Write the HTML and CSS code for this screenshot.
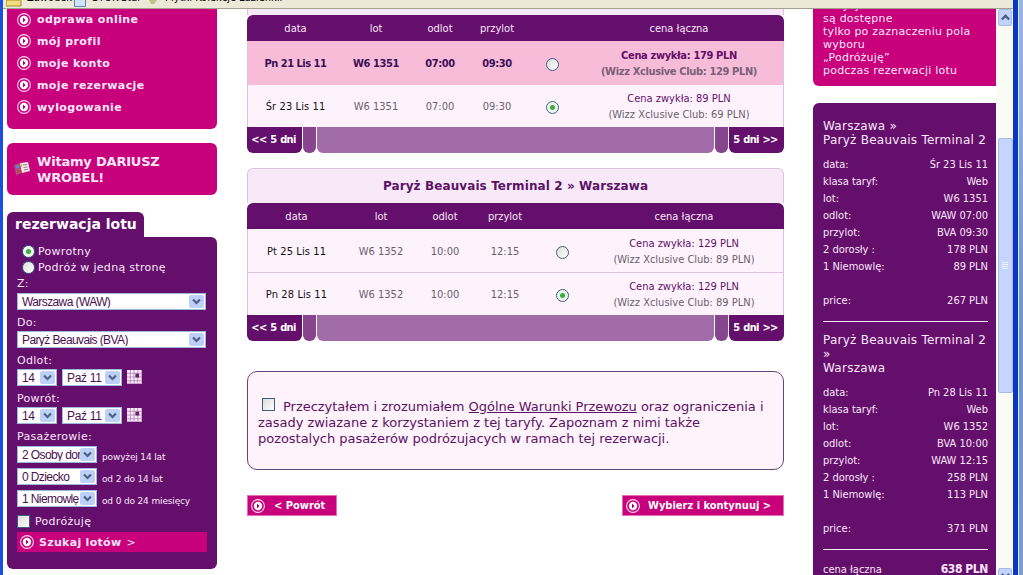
FILE: index.html
```html
<!DOCTYPE html>
<html lang="pl">
<head>
  <meta charset="UTF-8" />
  <title>Wizz Air - wybór lotu</title>
  <link rel="stylesheet" href="styles.css">
</head>
<body>
  <!-- shared icons -->
  <svg class="defs" width="0" height="0">
    <symbol id="bullet" viewBox="0 0 14 14">
      <circle cx="7" cy="7" r="6.4" fill="none" stroke="#fbd5ee" stroke-width="1.1"/>
      <circle cx="7" cy="7" r="4.2" fill="#fff"/>
      <path d="M6 4.6 L8.6 7 L6 9.4 Z" fill="#a0006e"/>
    </symbol>
    <symbol id="calendar" viewBox="0 0 16 15">
      <rect width="16" height="15" fill="#fbeefb"/>
      <path d="M0 3.5H16M0 7.5H16M0 11.5H16M3.5 0V15M7.5 0V15M11.5 0V15" stroke="#b98abd" stroke-width="1"/>
      <rect x="9" y="4" width="4" height="4" fill="#5a2a5e"/>
      <path d="M0 14.5H15.5V0" fill="none" stroke="#c79ac9"/>
    </symbol>
    <symbol id="arrow" viewBox="0 0 15 13">
      <path d="M4 4.5 L7.5 8 L11 4.5" fill="none" stroke="#4d6185" stroke-width="2.2"/>
    </symbol>
  </svg>

  <div class="window">
    <div class="toolbar">
      <svg class="folder" width="16" height="8" viewBox="0 0 16 8"><path d="M0 0H15V6H0Z" fill="#f3dc7c" stroke="#a58a35"/></svg>
      <span class="mark1">Zawodek</span>
      <svg width="12" height="8" viewBox="0 0 12 8"><path d="M.5 0V6.5H11.5V0" fill="#cfe3fb" stroke="#5d84c4"/></svg>
      <span class="mark2">STOK-Star</span>
      <svg width="10" height="8" viewBox="0 0 10 8"><path d="M1 0H9L6 4H3Z" fill="#b9c487"/></svg>
      <span class="mark3">Płytki Kolekcje Łazienkii</span>
    </div>

    <div class="viewport">
      <div class="page">
        <div class="left">
          <div class="menu">
            <a><svg><use href="#bullet"/></svg><span>odprawa online</span></a>
            <a><svg><use href="#bullet"/></svg><span>mój profil</span></a>
            <a><svg><use href="#bullet"/></svg><span>moje konto</span></a>
            <a><svg><use href="#bullet"/></svg><span>moje rezerwacje</span></a>
            <a><svg><use href="#bullet"/></svg><span>wylogowanie</span></a>
          </div>

          <div class="welcome">
            <svg width="16" height="15" viewBox="0 0 16 15">
              <path d="M0 4L6 2L8 12L2 14Z" fill="#a9508f"/>
              <path d="M6 2L14 1L16 10L8 12Z" fill="#f6eadc"/>
              <path d="M9 4L13 3.5M9.5 6.5L13.5 6M10 9L14 8.3" stroke="#8a79b8"/>
              <path d="M2 4H5V7H2Z" fill="#6f7bd0"/>
              <path d="M3 11L6 7L8 12Z" fill="#c8452e"/>
              <path d="M6 3L8 2.5L8.5 6L7 6Z" fill="#e8c33f"/>
            </svg>
            <p>Witamy DARIUSZ<br>WROBEL!</p>
          </div>

          <h2 class="tab">rezerwacja lotu</h2>
          <div class="booking">
            <div class="choice"><i class="radio on"></i><span>Powrotny</span></div>
            <div class="choice"><i class="radio"></i><span>Podróż w jedną stronę</span></div>
            <label>Z:</label>
            <div class="row"><div class="select wide"><span>Warszawa (WAW)</span><svg><use href="#arrow"/></svg></div></div>
            <label>Do:</label>
            <div class="row"><div class="select wide"><span>Paryż Beauvais (BVA)</span><svg><use href="#arrow"/></svg></div></div>
            <label>Odlot:</label>
            <div class="row">
              <div class="select day"><span>14</span><svg><use href="#arrow"/></svg></div>
              <div class="select month"><span>Paź 11</span><svg><use href="#arrow"/></svg></div>
              <svg class="cal"><use href="#calendar"/></svg>
            </div>
            <label>Powrót:</label>
            <div class="row">
              <div class="select day"><span>14</span><svg><use href="#arrow"/></svg></div>
              <div class="select month"><span>Paź 11</span><svg><use href="#arrow"/></svg></div>
              <svg class="cal"><use href="#calendar"/></svg>
            </div>
            <label>Pasażerowie:</label>
            <div class="passengers">
              <div class="row pax"><div class="select num"><span>2 Osoby dorosłe</span><svg><use href="#arrow"/></svg></div><small>powyżej 14 lat</small></div>
              <div class="row pax"><div class="select num"><span>0 Dziecko</span><svg><use href="#arrow"/></svg></div><small>od 2 do 14 lat</small></div>
              <div class="row pax"><div class="select num"><span>1 Niemowlę</span><svg><use href="#arrow"/></svg></div><small>od 0 do 24 miesięcy</small></div>
            </div>
            <div class="travel"><i class="check"></i><span>Podróżuję</span></div>
            <div class="search"><svg><use href="#bullet"/></svg><b>Szukaj lotów</b><span>&gt;</span></div>
          </div>
        </div>

        <div class="main">
          <div class="flights first">
            <div class="title"></div>
            <div class="line head"><span>data</span><span>lot</span><span>odlot</span><span>przylot</span><span></span><span>cena łączna</span></div>
            <div class="line picked">
              <span class="date">Pn 21 Lis 11</span><span>W6 1351</span><span>07:00</span><span>09:30</span><span><i class="radio"></i></span>
              <span class="price"><em>Cena zwykła: 179 PLN</em><br>(Wizz Xclusive Club: 129 PLN)</span>
            </div>
            <div class="line">
              <span class="date">Śr 23 Lis 11</span><span>W6 1351</span><span>07:00</span><span>09:30</span><span><i class="radio on"></i></span>
              <span class="price"><em>Cena zwykła: 89 PLN</em><br>(Wizz Xclusive Club: 69 PLN)</span>
            </div>
            <div class="pager"><b>&lt;&lt; 5 dni</b><i></i><i class="mid"></i><i></i><b>5 dni &gt;&gt;</b></div>
          </div>

          <div class="flights second">
            <div class="title"><h3>Paryż Beauvais Terminal 2 » Warszawa</h3></div>
            <div class="line head"><span>data</span><span>lot</span><span>odlot</span><span>przylot</span><span></span><span>cena łączna</span></div>
            <div class="line split">
              <span class="date">Pt 25 Lis 11</span><span>W6 1352</span><span>10:00</span><span>12:15</span><span><i class="radio"></i></span>
              <span class="price"><em>Cena zwykła: 129 PLN</em><br>(Wizz Xclusive Club: 89 PLN)</span>
            </div>
            <div class="line">
              <span class="date">Pn 28 Lis 11</span><span>W6 1352</span><span>10:00</span><span>12:15</span><span><i class="radio on"></i></span>
              <span class="price"><em>Cena zwykła: 129 PLN</em><br>(Wizz Xclusive Club: 89 PLN)</span>
            </div>
            <div class="pager"><b>&lt;&lt; 5 dni</b><i></i><i class="mid"></i><i></i><b>5 dni &gt;&gt;</b></div>
          </div>

          <div class="terms">
            <i class="check"></i>Przeczytałem i zrozumiałem <u>Ogólne Warunki Przewozu</u> oraz ograniczenia i<br>
            zasady zwiazane z korzystaniem z tej taryfy. Zapoznam z nimi także<br>
            pozostalych pasażerów podrózujacych w ramach tej rezerwacji.
          </div>

          <div class="buttons">
            <div class="btn back"><svg><use href="#bullet"/></svg><b>&lt; Powrót</b></div>
            <div class="btn next"><svg><use href="#bullet"/></svg><b>Wybierz i kontynuuj &gt;</b></div>
          </div>
        </div>

        <div class="right">
          <div class="info"><p>Pozycje<br>są dostępne<br>tylko po zaznaczeniu pola<br>wyboru<br>„Podróżuję”<br>podczas rezerwacji lotu</p></div>
          <div class="summary">
            <h4>Warszawa »<br>Paryż Beauvais Terminal 2</h4>
            <dl>
              <dt>data:</dt><dd>Śr 23 Lis 11</dd>
              <dt>klasa taryf:</dt><dd>Web</dd>
              <dt>lot:</dt><dd>W6 1351</dd>
              <dt>odlot:</dt><dd>WAW 07:00</dd>
              <dt>przylot:</dt><dd>BVA 09:30</dd>
              <dt>2 dorosły :</dt><dd>178 PLN</dd>
              <dt>1 Niemowlę:</dt><dd>89 PLN</dd>
              <dt class="sum">price:</dt><dd class="sum">267 PLN</dd>
            </dl>
            <h4>Paryż Beauvais Terminal 2<br>»<br>Warszawa</h4>
            <dl>
              <dt>data:</dt><dd>Pn 28 Lis 11</dd>
              <dt>klasa taryf:</dt><dd>Web</dd>
              <dt>lot:</dt><dd>W6 1352</dd>
              <dt>odlot:</dt><dd>BVA 10:00</dd>
              <dt>przylot:</dt><dd>WAW 12:15</dd>
              <dt>2 dorosły :</dt><dd>258 PLN</dd>
              <dt>1 Niemowlę:</dt><dd>113 PLN</dd>
              <dt class="sum">price:</dt><dd class="sum">371 PLN</dd>
            </dl>
            <div class="total"><span>cena łączna</span><b>638 PLN</b></div>
          </div>
        </div>
      </div>

      <div class="scrollbar">
        <div class="sb-btn"><svg width="13" height="15" viewBox="0 0 13 15"><path d="M2.8 9.5L6.5 5.8L10.2 9.5" fill="none" stroke="#4d6185" stroke-width="2.4"/></svg></div>
        <div class="thumb"><i></i><i></i><i></i><i></i></div>
        <div class="sb-btn"><svg width="13" height="15" viewBox="0 0 13 15"><path d="M2.8 5L6.5 8.7L10.2 5" fill="none" stroke="#4d6185" stroke-width="2.4"/></svg></div>
      </div>
    </div>
  </div>
  <div class="desktop"></div>
</body>
</html>
```

FILE: styles.css
```css
* {
  box-sizing: border-box;
}

body {
  margin: 0;
  width: 1023px;
  height: 575px;
  display: flex;
  overflow: hidden;
  background: #fff;
  font-family: "DejaVu Sans", sans-serif;
  font-size: 11px;
}

h2, h3, h4, p, dl, dd {
  margin: 0;
}

.defs {
  display: none;
}

/* WINDOW */
.window {
  width: 1018px;
  height: 575px;
  display: flex;
  flex-direction: column;
  border-left: 3px solid #1a4fe0;
  border-right: 5px solid #0a36c4;
  overflow: hidden;
}

.desktop {
  flex: 1;
  border-left: 1px solid #dbe8fb;
  background: linear-gradient(#9ab4e4, #6f93cc 60%, #7e9dcc);
}

.toolbar {
  flex: none;
  height: 9px;
  display: flex;
  padding-left: 3px;
  background: #ece9d8;
  border-bottom: 1px solid #a3a18f;
  overflow: hidden;
  font: 11px/13px "DejaVu Sans Condensed", "DejaVu Sans", sans-serif;
  white-space: nowrap;
}

.toolbar span {
  margin-top: -9px;
}

.mark1 { width: 43px; margin-left: 5px; margin-right: 4px; }
.mark2 { width: 53px; margin-left: 6px; margin-right: 3px; }
.mark3 { margin-left: 7px; }

.viewport {
  flex: 1;
  display: flex;
  min-height: 0;
  overflow: hidden;
}

.page {
  width: 994px;
  display: flex;
  overflow: hidden;
}

/* LEFT */
.left {
  flex: none;
  width: 214px;
  padding-left: 4px;
  color: #fbe6fa;
}

.menu {
  height: 120px;
  padding-left: 10px;
  background: #c8007b;
  border-radius: 0 0 6px 6px;
}

.menu a {
  display: flex;
  align-items: center;
  gap: 6px;
  height: 22px;
  font-weight: bold;
  letter-spacing: 0.4px;
}

.menu a:first-child {
  height: 21px;
}

.menu svg, .search svg, .btn svg {
  width: 14px;
  height: 14px;
}

.welcome {
  display: flex;
  gap: 7px;
  height: 52px;
  margin-top: 14px;
  padding: 11px 0 0 7px;
  background: #c8007b;
  border-radius: 6px;
  font-weight: bold;
  font-size: 13px;
  line-height: 16px;
  letter-spacing: -0.2px;
}

.welcome svg {
  margin-top: 7px;
}

.tab {
  width: 137px;
  height: 26px;
  margin-top: 17px;
  padding-left: 8px;
  background: #640f6b;
  border-radius: 6px 6px 0 0;
  font-size: 14px;
  line-height: 24px;
  color: #fff;
  white-space: nowrap;
}

.booking {
  height: 332px;
  margin-top: -1px;
  padding: 6px 10px 0;
  background: #640f6b;
  border-radius: 0 6px 6px 6px;
}

.choice {
  display: flex;
  align-items: center;
  gap: 3px;
  height: 16px;
  padding-left: 5px;
  letter-spacing: 0.3px;
}

.radio {
  flex: none;
  display: inline-block;
  width: 13px;
  height: 13px;
  border: 1px solid #3a5f86;
  border-radius: 50%;
  background: linear-gradient(135deg, #dcdcd8, #fff);
}

.radio.on {
  background: radial-gradient(circle, #3fae3a 0 2px, #e9f3e6 3px, #fff);
}

.booking label {
  display: block;
  height: 16px;
  margin-top: 4px;
  line-height: 17px;
  letter-spacing: 0.3px;
}

.choice + label {
  margin-top: 0;
  height: 17px;
  line-height: 18px;
}

.row {
  display: flex;
  gap: 6px;
  height: 18px;
  align-items: center;
}

.select {
  display: flex;
  height: 17px;
  padding: 1px 1px 1px 4px;
  border: 1px solid #9bb8da;
  background: #fff;
  color: #4a1050;
  font: 12px/14px "Liberation Sans", Arial, sans-serif;
}

.select span {
  flex: 1;
  overflow: hidden;
  white-space: nowrap;
  letter-spacing: -0.6px;
}

.select svg {
  flex: none;
  width: 15px;
  height: 13px;
  background: #bdd0f8;
  border-radius: 2px;
}

.wide { width: 189px; }
.day { width: 40px; }
.month { width: 60px; margin-left: -1px; }
.num { width: 80px; }

.day span, .month span {
  letter-spacing: -0.3px;
}

.cal {
  width: 15px;
  height: 14px;
  margin-left: -1px;
}

.passengers {
  height: 67px;
  margin-top: -1px;
}

.pax {
  height: 22px;
  gap: 5px;
}

.pax small {
  padding-top: 6px;
  font-size: 9px;
  letter-spacing: -0.15px;
  white-space: nowrap;
}

.travel {
  display: flex;
  align-items: center;
  gap: 5px;
  height: 22px;
  letter-spacing: 0.3px;
}

.check {
  display: inline-block;
  width: 13px;
  height: 13px;
  border: 1px solid #3a5f86;
  background: linear-gradient(135deg, #dcdcd8, #fff);
}

.search {
  display: flex;
  align-items: center;
  gap: 5px;
  height: 20px;
  padding-left: 3px;
  background: #c8007b;
  letter-spacing: 0.3px;
}

/* MAIN */
.main {
  flex: none;
  width: 537px;
  margin-left: 30px;
}

.flights {
  font-family: "DejaVu Sans Condensed", "DejaVu Sans", sans-serif;
}

.title {
  height: 35px;
  border: 1px solid #dcc3dd;
  border-bottom: 0;
  border-radius: 6px 6px 0 0;
  background: #f7e9f8;
  text-align: center;
}

.title h3 {
  font: bold 12px/35px "DejaVu Sans", sans-serif;
  letter-spacing: 0.1px;
  color: #5c1266;
}

.first .title {
  height: 6px;
  border-top: 0;
  border-radius: 0;
}

.second {
  margin-top: 15px;
}

.line {
  display: grid;
  align-items: center;
  height: 43px;
  padding-top: 1px;
  border: 1px solid #dcc3dd;
  border-width: 0 1px;
  background: #fef3fd;
  color: #6a606c;
  text-align: center;
  line-height: 16px;
}

.first .line {
  grid-template-columns: 95px 66px 62px 52px 58px 196px;
}

.second .line {
  grid-template-columns: 97px 72px 56px 64px 50px 194px;
}

.first .line:nth-child(4) {
  height: 42px;
}

.line .radio {
  display: block;
  margin: 2px auto 0;
}

.line .date {
  color: #111;
  letter-spacing: 0.1px;
}

.line em {
  font-style: normal;
  color: #640f6b;
}

.line.head {
  height: 26px;
  border: 0;
  padding-left: 1px;
  background: #640f6b;
  border-radius: 6px 6px 0 0;
  color: #fbe6fa;
}

.line.picked {
  height: 44px;
  background: #f7bcd7;
  font-weight: bold;
  letter-spacing: -0.4px;
  color: #3c1058;
}

.picked .date {
  color: #3c1058;
  letter-spacing: -0.5px;
}

.picked .price {
  color: #7a6078;
  letter-spacing: -0.35px;
}

.line.split {
  height: 44px;
  padding-top: 2px;
  border-bottom: 1px solid #dcc3dd;
}

.second .line:nth-child(4) {
  height: 42px;
}

.pager {
  display: grid;
  grid-template-columns: 55px 13px 397px 13px 55px;
  gap: 1px;
  height: 26px;
}

.pager b, .pager i {
  background: #640f6b;
  border-radius: 0 0 6px 6px;
  color: #fff;
  line-height: 26px;
  text-align: center;
  white-space: nowrap;
  letter-spacing: -0.7px;
  word-spacing: 1px;
}

.pager b:first-child { padding-right: 2px; }
.pager b:last-child { padding-right: 2px; }
.pager i { background: #87458d; }
.pager .mid { background: #a16ca8; }

.terms {
  height: 99px;
  margin-top: 30px;
  padding: 26px 0 0 10px;
  border: 1px solid #65447a;
  border-radius: 10px;
  background: #fff3fb;
  color: #5c1266;
  font-size: 13px;
  line-height: 16px;
  letter-spacing: -0.03px;
  white-space: nowrap;
}

.terms .check {
  margin: 0 8px 0 4px;
}

.buttons {
  display: flex;
  justify-content: space-between;
  margin-top: 25px;
}

.btn {
  display: flex;
  align-items: center;
  height: 21px;
  padding-left: 3px;
  background: #c8007b;
  border: 1px solid #e670b8;
  color: #fff;
  font: 11px "DejaVu Sans Condensed", sans-serif;
  white-space: nowrap;
}

.back { width: 90px; gap: 9px; }
.next { width: 162px; gap: 8px; }

/* RIGHT */
.right {
  flex: none;
  width: 183px;
  margin-left: 29px;
  color: #fbe6fa;
}

.info {
  height: 77px;
  display: flex;
  align-items: flex-end;
  padding: 0 0 9px 10px;
  overflow: hidden;
  background: #c8007b;
  border-radius: 0 0 0 6px;
  line-height: 13px;
  letter-spacing: 0.22px;
  white-space: nowrap;
}

.summary {
  height: 480px;
  margin-top: 17px;
  padding: 16px 8px 0 10px;
  background: #640f6b;
  border-radius: 6px 0 0 0;
}

.summary h4 {
  font-weight: normal;
  font-size: 12px;
  line-height: 14px;
  letter-spacing: 0.25px;
  white-space: nowrap;
}

.summary dl {
  display: grid;
  grid-template-columns: 1fr auto;
  grid-template-rows: repeat(7, 17px) 34px;
  margin: 9px 0 11px;
  padding-bottom: 12px;
  border-bottom: 1px solid #fbe6fa;
  font-family: "DejaVu Sans Condensed", "DejaVu Sans", sans-serif;
  line-height: 17px;
}

.summary dd {
  text-align: right;
}

.summary .sum {
  padding-top: 17px;
}

.total {
  display: flex;
  justify-content: space-between;
  font-family: "DejaVu Sans Condensed", "DejaVu Sans", sans-serif;
  line-height: 17px;
}

.total b {
  font-size: 12px;
  letter-spacing: -0.4px;
}

/* SCROLLBAR */
.scrollbar {
  flex: 1;
  display: flex;
  flex-direction: column;
  align-items: center;
  background: #fbfbf6;
}

.sb-btn {
  flex: none;
  width: 14px;
  height: 17px;
  background: #c2d3fc;
  border: 1px solid #a4b9ea;
  border-radius: 2px;
  line-height: 0;
}

.thumb {
  flex: none;
  display: flex;
  flex-direction: column;
  align-items: center;
  justify-content: center;
  gap: 1px;
  width: 15px;
  height: 255px;
  margin: 112px 0 175px;
  background: #c5d5fd;
  border: 1px solid #a4b9ea;
  border-radius: 2px;
}

.thumb i {
  width: 6px;
  height: 1px;
  background: #eef4fe;
}
```
